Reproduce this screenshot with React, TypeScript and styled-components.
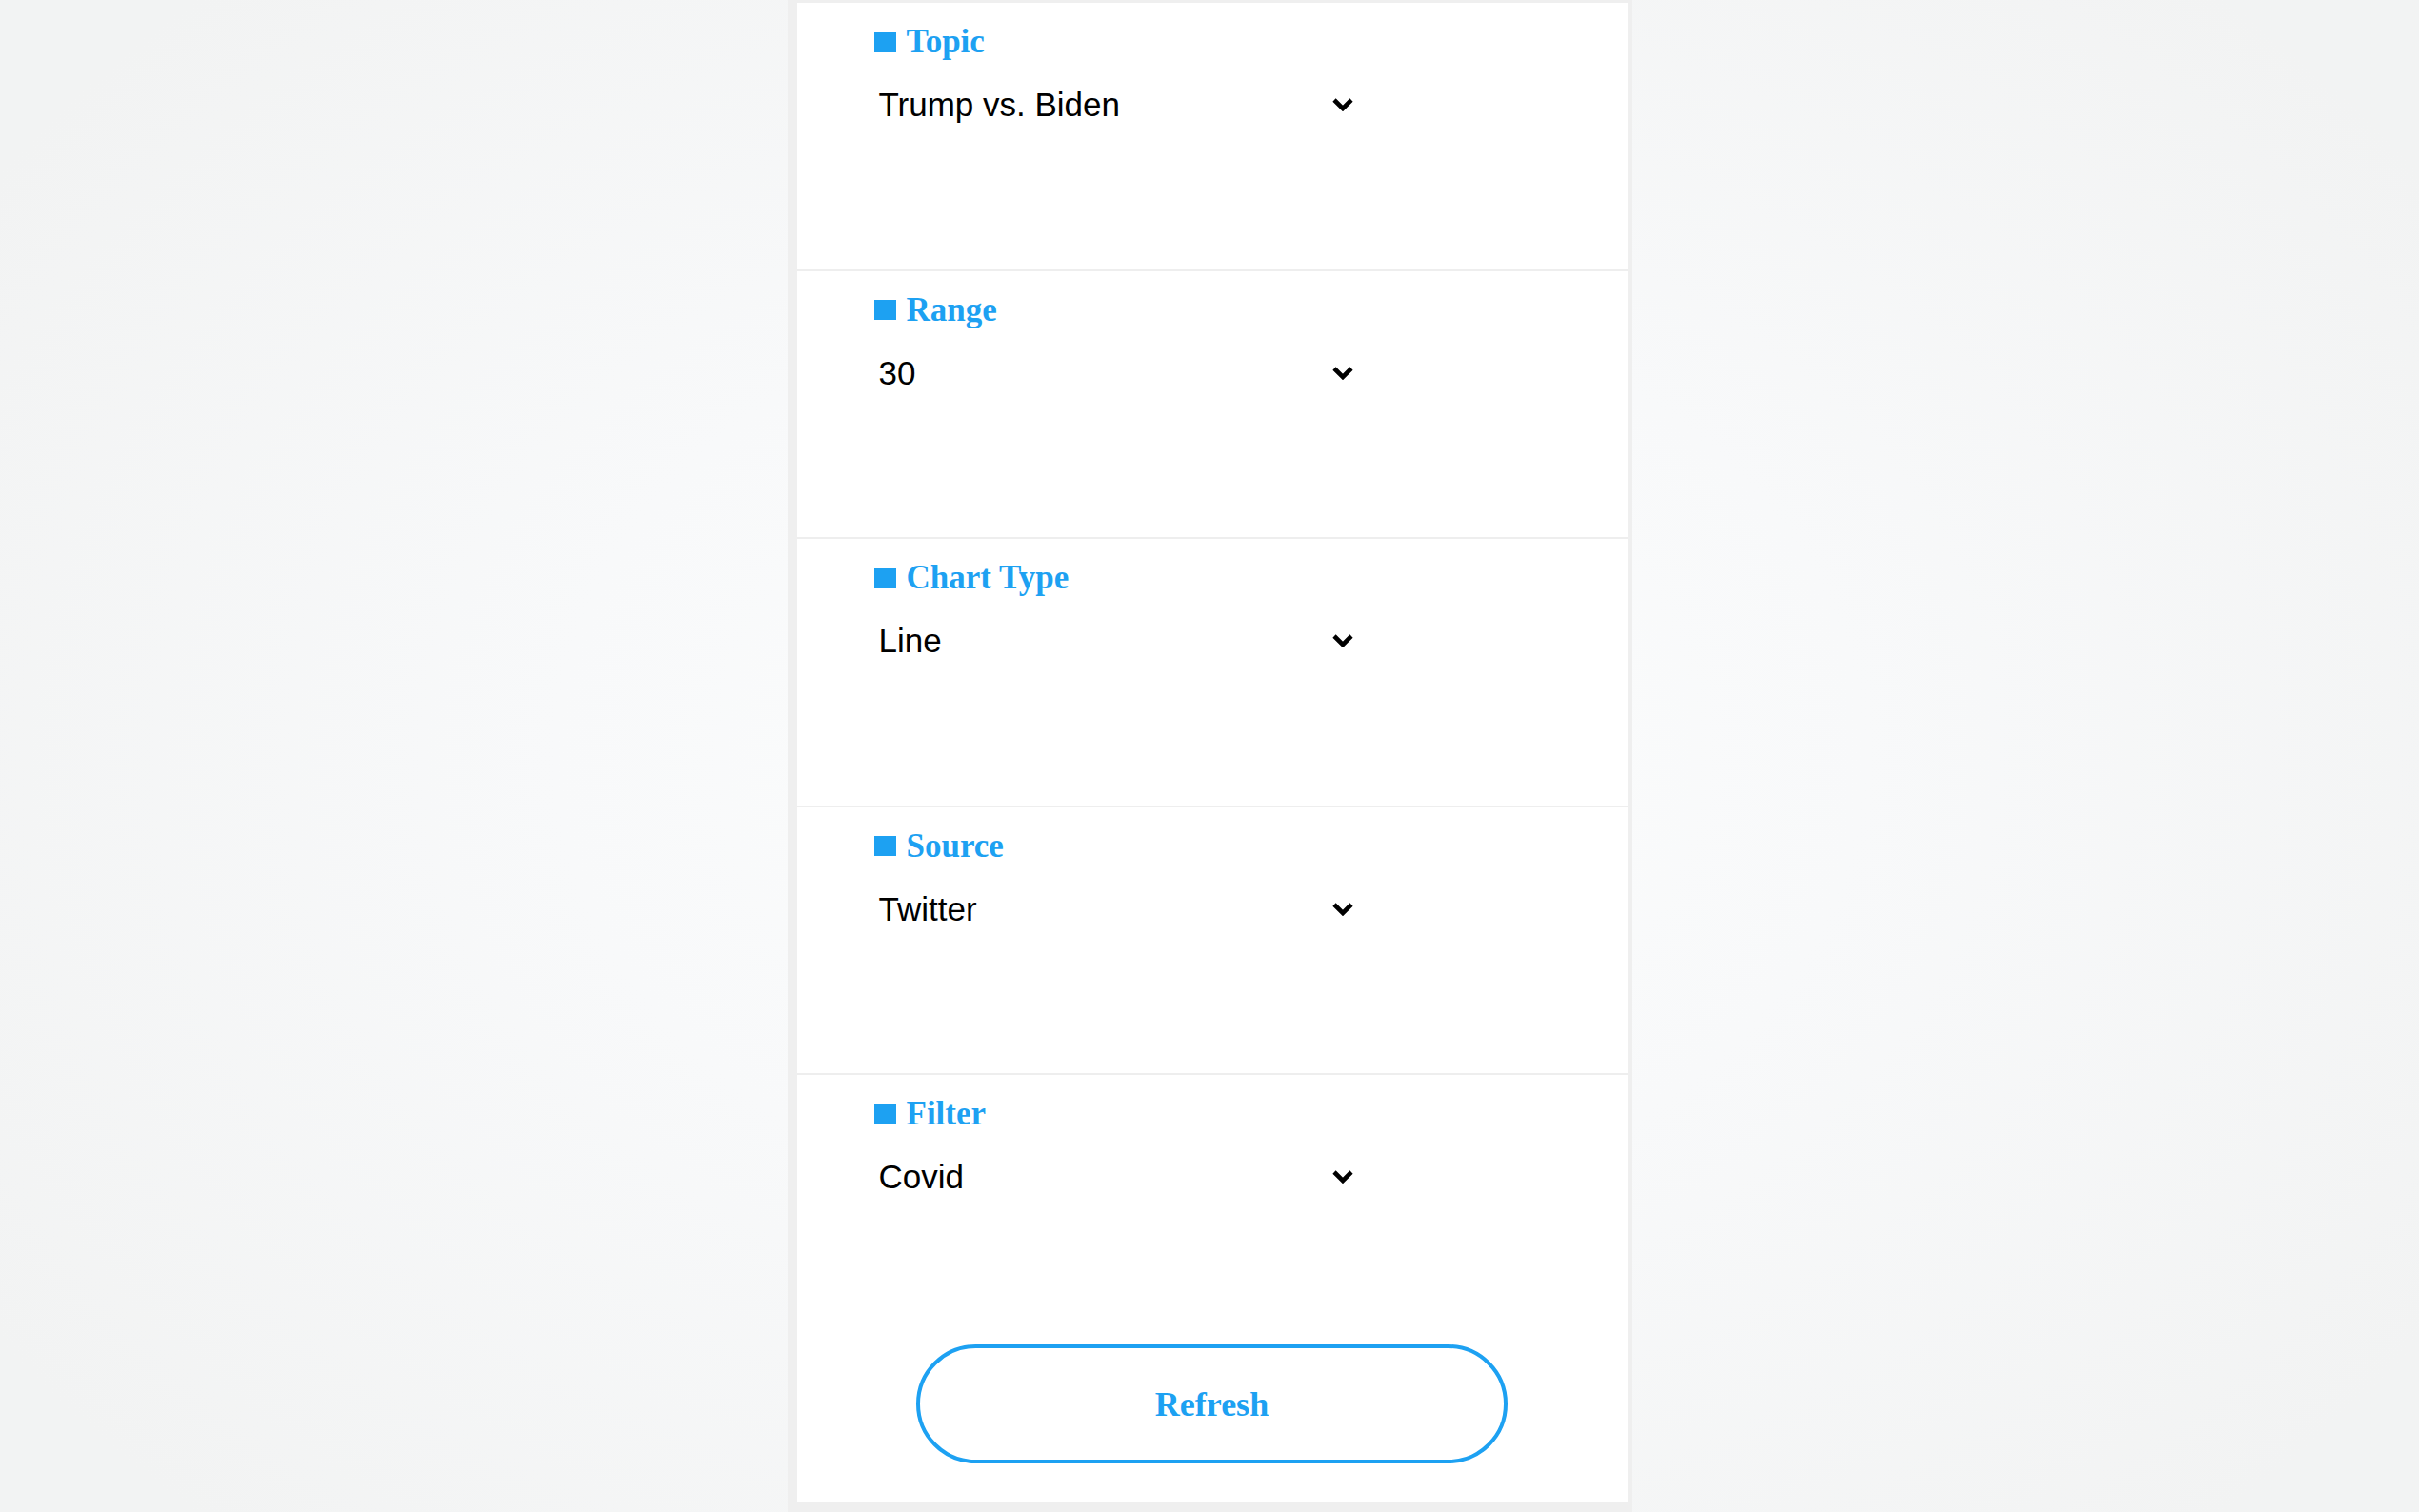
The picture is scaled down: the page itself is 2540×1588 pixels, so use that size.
import React from "react";
import styled, { createGlobalStyle } from "styled-components";

const Global = createGlobalStyle`
  html, body {
    margin: 0;
    padding: 0;
    width: 100%;
    height: 100%;
    overflow: hidden;
  }
  body {
    background: radial-gradient(ellipse 60% 70% at 50% 50%, #fcfdfd 0%, #f8f9fa 45%, #f2f3f3 100%);
    font-family: "Liberation Serif", "Times New Roman", serif;
  }
`;

const Page = styled.div`
  width: 2540px;
  height: 1588px;
  display: flex;
  justify-content: center;
  box-sizing: border-box;
`;

const Panel = styled.div`
  width: 887px;
  height: 1588px;
  box-sizing: border-box;
  border-style: solid;
  border-color: #efefef;
  border-width: 3px 5px 11px 10px;
  background: #ffffff;
  display: flex;
  flex-direction: column;
`;

const Section = styled.section<{ $last?: boolean }>`
  box-sizing: border-box;
  height: ${(p) => (p.$last ? "auto" : "281.5px")};
  flex: ${(p) => (p.$last ? "1 1 auto" : "0 0 auto")};
  border-bottom: ${(p) => (p.$last ? "none" : "2px solid #eeeeee")};
  padding: 21px 0 0 81px;
  display: flex;
  flex-direction: column;
  gap: 26px;
`;

const Heading = styled.h3`
  margin: 0;
  display: flex;
  align-items: center;
  gap: 11px;
  height: 40px;
  line-height: 40px;
  font-family: "Liberation Serif", "Times New Roman", serif;
  font-weight: 700;
  font-size: 35px;
  color: #1da1f2;
`;

const Marker = styled.span`
  display: inline-block;
  width: 23px;
  height: 21px;
  background: #1da1f2;
`;

const SelectRow = styled.div`
  margin-left: 5px;
  width: 499px;
  height: 40px;
  display: flex;
  align-items: center;
  justify-content: space-between;
  font-family: "Liberation Sans", Arial, Helvetica, sans-serif;
  font-size: 35px;
  line-height: 40px;
  color: #000000;
`;

const Chevron = styled.svg`
  width: 24px;
  height: 15px;
  flex: 0 0 auto;
  margin-bottom: 1px;
`;

const ButtonWrap = styled.div`
  display: flex;
  justify-content: center;
  margin-top: 130px;
  margin-left: -81px;
`;

const RefreshButton = styled.button`
  width: 621px;
  height: 125px;
  box-sizing: border-box;
  border: 4px solid #1da1f2;
  border-radius: 63px;
  background: #ffffff;
  color: #1da1f2;
  font-family: "Liberation Serif", "Times New Roman", serif;
  font-weight: 700;
  font-size: 36px;
  cursor: pointer;
  padding: 0;
`;

const fields = [
  { label: "Topic", value: "Trump vs. Biden" },
  { label: "Range", value: "30" },
  { label: "Chart Type", value: "Line" },
  { label: "Source", value: "Twitter" },
  { label: "Filter", value: "Covid" },
];

const ChevronIcon = () => (
  <Chevron viewBox="0 0 24 15">
    <polyline
      points="3,3 12,12 21,3"
      fill="none"
      stroke="#000"
      strokeWidth="4.6"
      strokeLinecap="butt"
      strokeLinejoin="miter"
    />
  </Chevron>
);

export default function App() {
  return (
    <>
      <Global />
      <Page>
        <Panel>
          {fields.map((f, i) => {
            const last = i === fields.length - 1;
            return (
              <Section key={f.label} $last={last}>
                <Heading>
                  <Marker />
                  {f.label}
                </Heading>
                <SelectRow>
                  <span>{f.value}</span>
                  <ChevronIcon />
                </SelectRow>
                {last && (
                  <ButtonWrap>
                    <RefreshButton>Refresh</RefreshButton>
                  </ButtonWrap>
                )}
              </Section>
            );
          })}
        </Panel>
      </Page>
    </>
  );
}
